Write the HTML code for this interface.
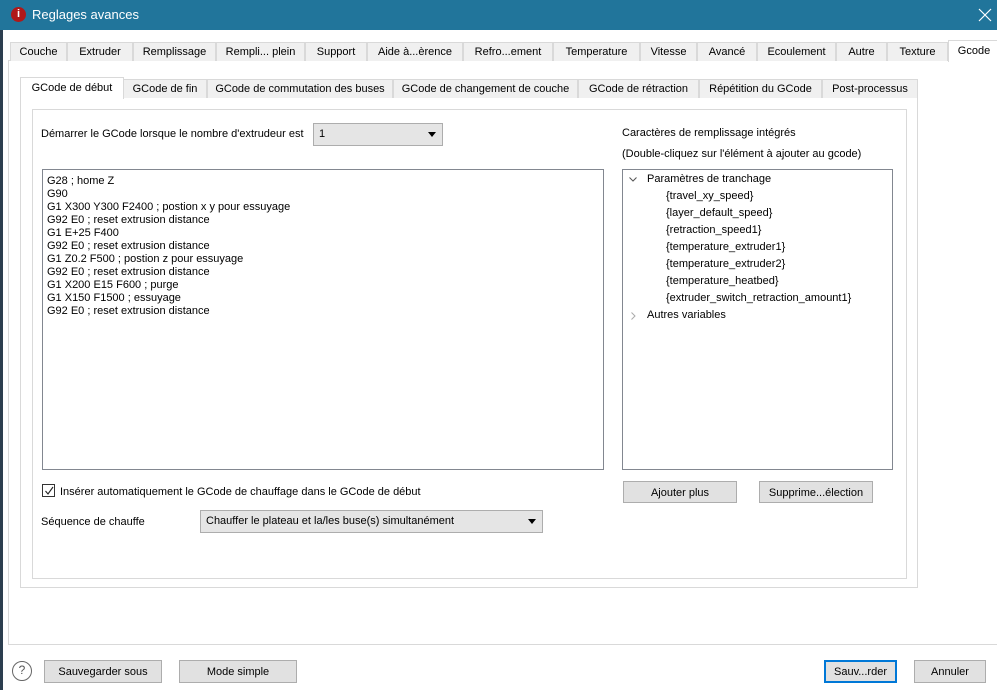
<!DOCTYPE html>
<html><head><meta charset="utf-8"><style>
*{box-sizing:border-box;margin:0;padding:0}
body{width:997px;height:690px;overflow:hidden;background:#fff;font-family:"Liberation Sans",sans-serif;font-size:11px;color:#000;position:relative}
.a{position:absolute}
.tb{left:0;top:0;width:997px;height:30px;background:#21759b}
.tab{position:absolute;top:42px;height:19px;border:1px solid #d9d9d9;border-bottom:none;background:#f0f0f0;text-align:center;line-height:19px;white-space:nowrap;overflow:hidden}
.it{position:absolute;top:79px;height:19px;border:1px solid #d9d9d9;border-bottom:none;background:#f0f0f0;text-align:center;line-height:19px;white-space:nowrap;overflow:hidden}
.btn{position:absolute;border:1px solid #adadad;background:#e1e1e1;text-align:center;line-height:22px}
.combo{position:absolute;border:1px solid #adadad;background:#e5e5e5;line-height:21px;padding-left:5px}
.combo:after{content:"";position:absolute;right:6px;top:8px;border-left:4px solid transparent;border-right:4px solid transparent;border-top:5px solid #000}
.code div{height:13px;line-height:13px}
.tree div{height:17px;line-height:17px}
</style></head><body>
<div class="a" style="left:0;top:0;width:3px;height:690px;background:#2c3e4f"></div>
<div class="a tb"></div>
<div class="a" style="left:11px;top:7px;width:15px;height:15px;border-radius:50%;background:#b01818;color:#fff;font-weight:bold;font-size:11px;text-align:center;line-height:15px">i</div>
<div class="a" style="left:32px;top:7px;color:#fff;font-size:13px">Reglages avances</div>
<svg class="a" style="left:978px;top:8px" width="14" height="14"><path d="M1 1L13 13M13 1L1 13" stroke="#fff" stroke-width="1.2"/></svg>

<div class="a" style="left:8px;top:60px;width:995px;height:585px;border:1px solid #d9d9d9;background:#fff"></div>
<div class="tab" style="left:10px;width:57px">Couche</div>
<div class="tab" style="left:67px;width:66px">Extruder</div>
<div class="tab" style="left:133px;width:83px">Remplissage</div>
<div class="tab" style="left:216px;width:89px">Rempli... plein</div>
<div class="tab" style="left:305px;width:62px">Support</div>
<div class="tab" style="left:367px;width:96px">Aide à...èrence</div>
<div class="tab" style="left:463px;width:90px">Refro...ement</div>
<div class="tab" style="left:553px;width:87px">Temperature</div>
<div class="tab" style="left:640px;width:57px">Vitesse</div>
<div class="tab" style="left:697px;width:60px">Avancé</div>
<div class="tab" style="left:757px;width:79px">Ecoulement</div>
<div class="tab" style="left:836px;width:51px">Autre</div>
<div class="tab" style="left:887px;width:61px">Texture</div>
<div class="tab" style="left:948px;top:40px;width:52px;height:22px;background:#fff;line-height:21px">Gcode</div>

<div class="a" style="left:20px;top:97px;width:898px;height:491px;border:1px solid #d9d9d9"></div>
<div class="it" style="left:20px;top:77px;width:104px;height:22px;background:#fff;line-height:21px">GCode de début</div>
<div class="it" style="left:123px;width:84px">GCode de fin</div>
<div class="it" style="left:207px;width:186px">GCode de commutation des buses</div>
<div class="it" style="left:393px;width:185px">GCode de changement de couche</div>
<div class="it" style="left:578px;width:121px">GCode de rétraction</div>
<div class="it" style="left:699px;width:123px">Répétition du GCode</div>
<div class="it" style="left:822px;width:96px">Post-processus</div>

<div class="a" style="left:32px;top:109px;width:875px;height:470px;border:1px solid #d9d9d9"></div>
<div class="a" style="left:41px;top:128px">Démarrer le GCode lorsque le nombre d'extrudeur est</div>
<div class="combo" style="left:313px;top:123px;width:130px;height:23px">1</div>

<div class="a code" style="left:42px;top:169px;width:562px;height:301px;border:1px solid #828790;padding:5px 0 0 4px">
<div>G28 ; home Z</div><div>G90</div><div>G1 X300 Y300 F2400 ; postion x y pour essuyage</div><div>G92 E0 ; reset extrusion distance</div><div>G1 E+25 F400</div><div>G92 E0 ; reset extrusion distance</div><div>G1 Z0.2 F500 ; postion z pour essuyage</div><div>G92 E0 ; reset extrusion distance</div><div>G1 X200 E15 F600 ; purge</div><div>G1 X150 F1500 ; essuyage</div><div>G92 E0 ; reset extrusion distance</div>
</div>

<div class="a" style="left:622px;top:127px">Caractères de remplissage intégrés</div>
<div class="a" style="left:622px;top:148px">(Double-cliquez sur l'élément à ajouter au gcode)</div>
<div class="a tree" style="left:622px;top:169px;width:271px;height:301px;border:1px solid #828790;padding:1px 0 0 0">
<div style="padding-left:24px;position:relative"><svg style="position:absolute;left:6px;top:6px" width="8" height="5"><path d="M0.5 0.5L4 4L7.5 0.5" stroke="#555" fill="none"/></svg>Paramètres de tranchage</div>
<div style="padding-left:43px">{travel_xy_speed}</div>
<div style="padding-left:43px">{layer_default_speed}</div>
<div style="padding-left:43px">{retraction_speed1}</div>
<div style="padding-left:43px">{temperature_extruder1}</div>
<div style="padding-left:43px">{temperature_extruder2}</div>
<div style="padding-left:43px">{temperature_heatbed}</div>
<div style="padding-left:43px">{extruder_switch_retraction_amount1}</div>
<div style="padding-left:24px;position:relative"><svg style="position:absolute;left:8px;top:5px" width="5" height="8"><path d="M0.5 0.5L4 4L0.5 7.5" stroke="#aaa" fill="none"/></svg>Autres variables</div>
</div>

<div class="a" style="left:42px;top:484px;width:13px;height:13px;border:1px solid #333"><svg class="a" style="left:1px;top:1px" width="10" height="10"><path d="M1.5 5L4 8L9 1" stroke="#222" fill="none" stroke-width="1.1"/></svg></div>
<div class="a" style="left:60px;top:486px">Insérer automatiquement le GCode de chauffage dans le GCode de début</div>
<div class="btn" style="left:623px;top:481px;width:114px;height:22px">Ajouter plus</div>
<div class="btn" style="left:759px;top:481px;width:114px;height:22px">Supprime...élection</div>
<div class="a" style="left:41px;top:516px">Séquence de chauffe</div>
<div class="combo" style="left:200px;top:510px;width:343px;height:23px">Chauffer le plateau et la/les buse(s) simultanément</div>

<div class="a" style="left:12px;top:661px;width:20px;height:20px;border:1.5px solid #666;border-radius:50%;text-align:center;line-height:17px;color:#555;font-size:12px">?</div>
<div class="btn" style="left:44px;top:660px;width:118px;height:23px">Sauvegarder sous</div>
<div class="btn" style="left:179px;top:660px;width:118px;height:23px">Mode simple</div>
<div class="btn" style="left:824px;top:660px;width:73px;height:23px;border:2px solid #0078d7;line-height:20px">Sauv...rder</div>
<div class="btn" style="left:914px;top:660px;width:72px;height:23px">Annuler</div>
</body></html>
